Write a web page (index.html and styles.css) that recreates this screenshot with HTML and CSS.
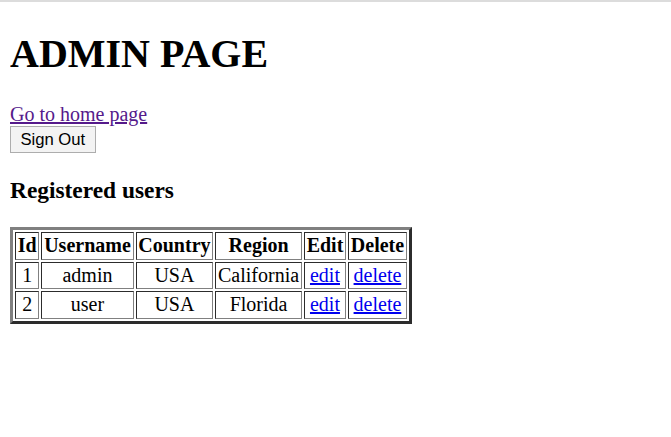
FILE: index.html
```html
<!DOCTYPE html>
<html>
<head>
<meta charset="utf-8">
<title>Admin</title>
<link rel="stylesheet" href="styles.css">
</head>
<body>
<h1 class="title">ADMIN PAGE</h1>
<a class="home" href="#">Go to home page</a><br>
<button class="signout" type="button">Sign Out</button>
<h3 class="section">Registered users</h3>
<table class="users">
<tr><th>Id</th><th>Username</th><th>Country</th><th>Region</th><th>Edit</th><th>Delete</th></tr>
<tr><td>1</td><td>admin</td><td>USA</td><td>California</td><td><a href="#">edit</a></td><td><a href="#">delete</a></td></tr>
<tr><td>2</td><td>user</td><td>USA</td><td>Florida</td><td><a href="#">edit</a></td><td><a href="#">delete</a></td></tr>
</table>
</body>
</html>
```
FILE: styles.css
```css
html {
  border-top: 2px solid #dcdcdc;
}
body {
  zoom: 1.25;
  margin: 8px;
  font-family: "Liberation Serif", "Times New Roman", serif;
  font-size: 16px;
  color: #000;
  background: #fff;
}
.title {
  font-size: 32px;
  margin: 14px 0 21.44px;
}
.home {
  color: #551a8b;
}
.signout {
  font-family: "Liberation Sans", Arial, sans-serif;
  font-size: 13.333px;
  line-height: 15.4px;
  padding: 2.3px 7.5px;
  margin: 0;
  border: 0.8px solid #adadad;
  border-radius: 0;
  background: #f3f3f3;
  color: #000;
}
.section {
  font-size: 18.72px;
  margin: 18.72px 0;
}
.users {
  border: 3px outset #808080;
  border-spacing: 2px;
}
.users th, .users td {
  border: 1px inset #808080;
  padding: 1px 1.4px;
  text-align: center;
}
.users a {
  color: #0000ee;
}
```
